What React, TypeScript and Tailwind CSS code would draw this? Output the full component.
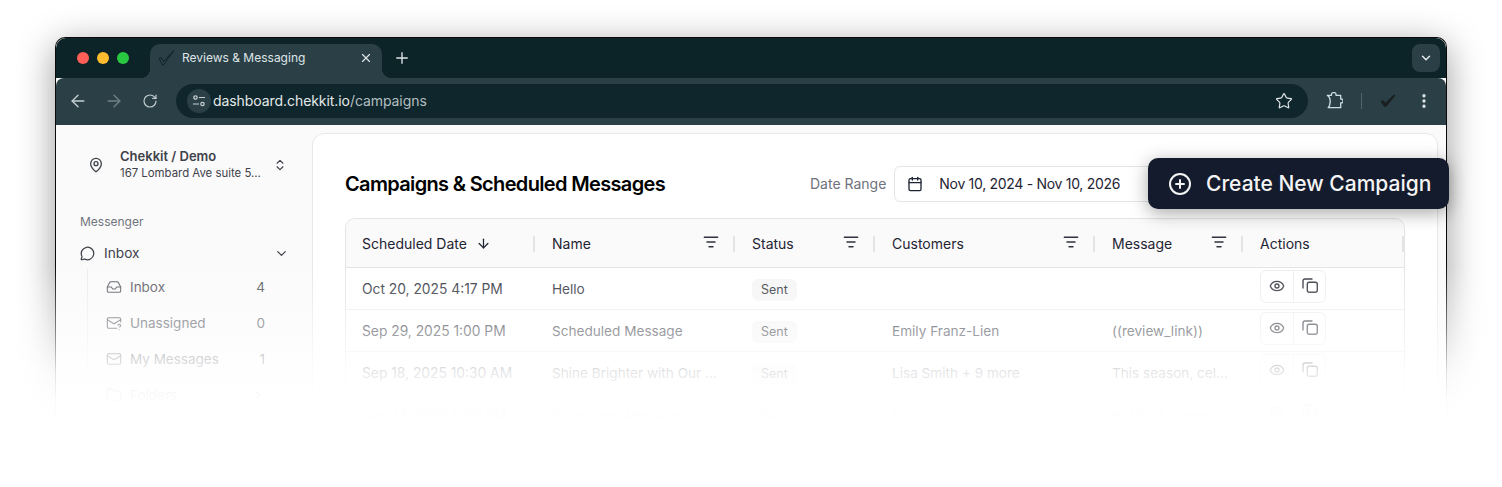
import {
  ArrowDown,
  ArrowLeft,
  ArrowRight,
  Calendar,
  ChevronDown,
  ChevronRight,
  ChevronsUpDown,
  EllipsisVertical,
  Eye,
  Folder,
  Inbox,
  ListFilter,
  Mail,
  MailQuestion,
  MapPin,
  MessageCircle,
  Plus,
  RotateCw,
  Star,
  X,
  CirclePlus,
} from 'lucide-react';

const columns = 'grid grid-cols-[189px_200px_140px_220px_148px_1fr]';

const headers = [
  { label: 'Scheduled Date', sort: true },
  { label: 'Name', filter: true },
  { label: 'Status', filter: true },
  { label: 'Customers', filter: true },
  { label: 'Message', filter: true },
  { label: 'Actions' },
];

const rows = [
  { date: 'Oct 20, 2025 4:17 PM', name: 'Hello', customers: '', message: '' },
  { date: 'Sep 29, 2025 1:00 PM', name: 'Scheduled Message', customers: 'Emily Franz-Lien', message: '((review_link))' },
  { date: 'Sep 18, 2025 10:30 AM', name: 'Shine Brighter with Our ...', customers: 'Lisa Smith + 9 more', message: 'This season, cel...' },
  { date: 'Jan 24, 2025 5:00 PM', name: 'Scheduled Message', customers: '1', message: 'Hi ((first_name)...' },
];

const inboxItems = [
  { label: 'Inbox', count: '4', icon: Inbox },
  { label: 'Unassigned', count: '0', icon: MailQuestion },
  { label: 'My Messages', count: '1', icon: Mail },
  { label: 'Folders', icon: Folder, more: true },
];

function TabBar() {
  return (
    <div className="flex h-[40px] items-end rounded-t-[10px] bg-[#0c2328]">
      <div className="flex h-[34px] w-[94px] items-start gap-2 pl-[21px] pt-2">
        <span className="size-3 rounded-full bg-[#ff5f57]" />
        <span className="size-3 rounded-full bg-[#febc2e]" />
        <span className="size-3 rounded-full bg-[#28c840]" />
      </div>
      <div className="relative flex h-[34px] w-[232px] items-center rounded-t-[10px] bg-[#2b4046] pb-[6px] pl-2 pr-[9px] text-[#dfe5e6]">
        <div className="absolute bottom-0 -left-[10px] size-[10px] bg-[radial-gradient(circle_at_0_0,transparent_10px,#2b4046_10.5px)]" />
        <div className="absolute bottom-0 -right-[10px] size-[10px] bg-[radial-gradient(circle_at_100%_0,transparent_10px,#2b4046_10.5px)]" />
        <svg viewBox="0 0 16 16" fill="none" className="size-4 text-[#0c2328]">
          <path d="M1 8.5 5 15.5 16 .5 5.5 11.5 3 7.5Z" stroke="currentColor" strokeWidth="1" strokeLinejoin="round" />
        </svg>
        <span className="ml-2 flex-1 text-xs">Reviews &amp; Messaging</span>
        <X size={14} strokeWidth={2} />
      </div>
      <div className="flex h-[34px] items-center pb-[6px] pl-[11px] text-[#dfe5e6]">
        <Plus size={18} strokeWidth={1.8} />
      </div>
      <div className="flex-1" />
      <div className="mb-[6px] mr-[6px] flex size-7 items-center justify-center rounded-lg bg-[#2b4046] text-[#e6ebec]">
        <ChevronDown size={14} strokeWidth={2.5} />
      </div>
    </div>
  );
}

function Toolbar() {
  return (
    <div className="flex h-[47px] items-center rounded-t-[8px] bg-[#2b4046] pb-px pl-[12px] pr-[12px] text-[#c6d0d2]">
      <ArrowLeft size={20} strokeWidth={1.6} />
      <ArrowRight size={20} strokeWidth={1.6} className="ml-4 text-[#6f8185]" />
      <RotateCw size={16} strokeWidth={1.7} className="ml-[18px]" />
      <div className="ml-[18px] flex h-[34px] w-[1132px] shrink-0 items-center rounded-full bg-[#0f272c] pl-[11px] pr-[15px]">
        <div className="flex size-6 items-center justify-center rounded-full bg-[#2b4046]">
          <svg viewBox="0 0 14 14" fill="none" stroke="currentColor" strokeWidth="1.2" className="size-[14px]">
            <circle cx="3.5" cy="3.5" r="1.7" />
            <path d="M7 3.5h6M1 10h6" />
            <circle cx="10.5" cy="10" r="1.7" />
          </svg>
        </div>
        <div className="ml-[2px] flex-1 text-sm tracking-[-0.07px] text-[#e4e9ea]">
          dashboard.chekkit.io<span className="text-[#b2bec0]">/campaigns</span>
        </div>
        <Star size={18} strokeWidth={1.6} className="text-[#dfe5e6]" />
      </div>
      <svg viewBox="0 0 18 18" fill="none" stroke="currentColor" strokeWidth="1.3" className="ml-[17px] size-[18px] text-[#c8e0e4]">
        <path d="M2.3 3.3H6.5V2.2a1.5 1.5 0 0 1 1.5-1.5h1.5a1.5 1.5 0 0 1 1.5 1.5V3.3H15.7V7h.4a2 2 0 0 1 0 4h-.4v4.7H3.2c1-1 2-3.5 2-6.7s-1.4-4.7-2.9-5.7Z" strokeLinejoin="round" />
      </svg>
      <div className="ml-[18px] h-4 w-px bg-[#51666b]" />
      <svg viewBox="0 0 16 14" className="ml-[18px] size-[16px] text-[#1b1f21] blur-[0.4px]">
        <path d="M.5 7.5 3 6 5.5 8.5 14 .5 15.5 1.5 6 13 4 12.5Z" fill="currentColor" />
      </svg>
      <EllipsisVertical size={18} strokeWidth={2.4} className="ml-[19px] text-[#dfe5e6]" />
    </div>
  );
}

function Sidebar() {
  return (
    <aside className="w-[256px] shrink-0 bg-[#fafafa] text-[#3f424b]">
      <div className="flex items-center pl-[32px] pr-[25px] pt-[23px]">
        <MapPin size={16} />
        <div className="ml-4 flex-1">
          <div className="text-[13px] leading-[17px] font-semibold">Chekkit / Demo</div>
          <div className="text-[11.4px] leading-[17px]">167 Lombard Ave suite 5...</div>
        </div>
        <ChevronsUpDown size={14} strokeWidth={2} />
      </div>
      <div className="mt-[32px] pl-6 text-xs leading-4 text-[#71747d]">Messenger</div>
      <div className="mt-[13px] flex items-center pl-6 pr-[23px] text-[13.7px] leading-5">
        <MessageCircle size={15} />
        <span className="ml-[9px] flex-1">Inbox</span>
        <ChevronDown size={15} />
      </div>
      <div className="ml-[31px] mt-[6px] border-l border-[#ececec] pl-[18px] pr-[47px]">
        {inboxItems.map((item) => (
          <div key={item.label} className="flex h-9 items-center text-[13.5px] text-[#555861]">
            <item.icon size={16} strokeWidth={1.6} />
            <span className="ml-2 flex-1">{item.label}</span>
            {item.more ? <ChevronRight size={14} /> : <span>{item.count}</span>}
          </div>
        ))}
      </div>
    </aside>
  );
}

function CampaignTable() {
  return (
    <div className="mt-[16px] rounded-t-[10px] border border-[#e3e4e6] text-[#30333d]">
      <div className={`${columns} h-[49px] rounded-t-[10px] border-b border-[#e3e4e6] bg-[#fafafa] text-[#1f2433]`}>
        {headers.map((header, index) => (
          <div key={header.label} className={`flex items-center pt-px ${index === 0 ? 'pl-[16px]' : 'pl-[17px]'}`}>
            <span className="text-sm">{header.label}</span>
            {header.sort && <ArrowDown size={15} className="ml-[9px]" />}
            <div className="flex-1" />
            {header.filter && <ListFilter size={16} strokeWidth={2.2} className="-mt-[3px] mr-[14px] text-[#30333d]" />}
            <div className="h-4 w-[2px] bg-[#e3e4e6]" />
          </div>
        ))}
      </div>
      {rows.map((row) => (
        <div key={row.date} className={`${columns} h-[42px] border-b border-[#ececee] text-[13.6px]`}>
          <div className="flex items-center pl-[16px] pt-[2px] text-[13.8px]">{row.date}</div>
          <div className="flex items-center pl-[17px] pt-[2px]">{row.name}</div>
          <div className="flex items-center pl-[17px] pt-[2px]">
            <span className="rounded-md bg-[#f5f5f6] px-[9px] py-[3px] text-[12.5px] leading-4">Sent</span>
          </div>
          <div className="flex items-center pl-[17px] pt-[2px]">{row.customers}</div>
          <div className="flex items-center pl-[17px] pt-[2px]">{row.message}</div>
          <div className="pl-[17px] pt-[2px]">
            <div className="flex h-[33px] w-[66px] rounded-md border border-[#ececee]">
              <div className="flex w-[33px] items-center justify-center border-r border-[#ececee]">
                <Eye size={16} className="-mt-px" />
              </div>
              <div className="flex flex-1 items-center justify-center">
                <svg viewBox="0 0 16 16" fill="none" stroke="currentColor" strokeWidth="1.4" className="-mt-px size-4">
                  <rect x="5.3" y="4.3" width="10" height="10" rx="2" />
                  <path d="M1 10V3a2 2 0 0 1 2-2h7" strokeLinecap="round" />
                </svg>
              </div>
            </div>
          </div>
        </div>
      ))}
    </div>
  );
}

function MainPanel() {
  return (
    <main className="mt-2 mr-[8px] flex-1 rounded-t-xl border border-[#e8e8e9] bg-white pl-[32px] pr-[32px] pt-[32px]">
      <div className="flex h-9 items-center">
        <h1 className="w-[465px] text-xl font-semibold tracking-[-0.66px] text-black">Campaigns &amp; Scheduled Messages</h1>
        <span className="text-sm text-[#6f727b]">Date Range</span>
        <div className="ml-2 flex h-9 w-[280px] items-center rounded-md border border-[#e3e4e6] pl-[12px] text-sm tracking-[-0.3px] text-[#1f2433]">
          <Calendar size={16} />
          <span className="ml-[16px]">Nov 10, 2024 - Nov 10, 2026</span>
        </div>
      </div>
      <CampaignTable />
    </main>
  );
}

export default function App() {
  return (
    <div className="relative h-[487px] w-[1502px] overflow-hidden bg-white pl-[55px] pt-[37px] font-['Inter',sans-serif]">
      <div className="h-[450px] w-[1392px] rounded-t-[10px] border border-b-0 border-[#0a0a0a] bg-[#fafafa] shadow-[0_8px_36px_rgba(0,0,0,0.4)]">
        <TabBar />
        <Toolbar />
        <div className="flex h-[360px]">
          <Sidebar />
          <MainPanel />
        </div>
      </div>

      {/* page fades out to white towards the bottom */}
      <div className="absolute inset-x-0 bottom-0 top-[260px] bg-[linear-gradient(to_bottom,rgba(255,255,255,0)_5px,rgba(255,255,255,0.5)_71px,rgba(255,255,255,0.88)_113px,rgba(255,255,255,0.98)_140px,rgba(255,255,255,0.992)_155px,#fff_175px)]" />

      <button className="absolute left-[1148px] top-[158px] flex h-[51px] w-[301px] items-center rounded-[10px] bg-[#141b2d] pl-[20px] text-[21px] font-medium text-[#f4f4f5] shadow-[0_4px_18px_rgba(0,0,0,0.35)]">
        <CirclePlus size={24} />
        <span className="ml-[14px]">Create New Campaign</span>
      </button>
    </div>
  );
}
